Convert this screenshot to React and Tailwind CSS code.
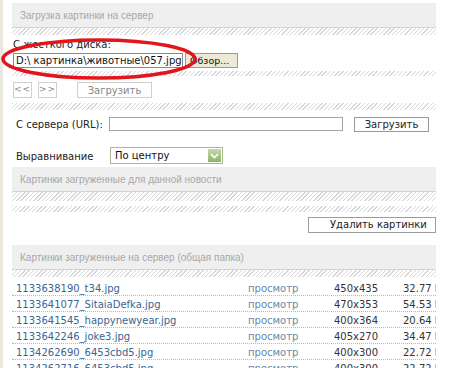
import React from 'react';

const hatch = 'bg-[repeating-linear-gradient(135deg,#d8d8d8_0px,#d8d8d8_1px,#ffffff_1px,#ffffff_3px)]';

const Header = ({ title }) => (
  <div className="h-[25px] bg-[#efefef] border-b border-[#d4d4d4] pl-[8px] flex items-center font-['Liberation_Sans',sans-serif] text-[10px] text-[#a8a8a8]">
    {title}
  </div>
);

const files = [
  ['1133638190_t34.jpg', '450x435', '32.77 Kb'],
  ['1133641077_SitaiaDefka.jpg', '470x353', '54.53 Kb'],
  ['1133641545_happynewyear.jpg', '400x364', '20.64 Kb'],
  ['1133642246_joke3.jpg', '405x270', '34.47 Kb'],
  ['1134262690_6453cbd5.jpg', '400x300', '22.72 Kb'],
  ['1134262716_6453cbd5.jpg', '400x300', '22.72 Kb'],
];

export default function App() {
  return (
    <div className="relative w-[450px] h-[368px] overflow-hidden bg-white flex font-['DejaVu_Sans',sans-serif] text-[10px] text-[#222]">
      <div className="w-[3px] h-full bg-[#ece8dd]" />

      <div className="ml-[9px] w-[424px] pt-[3px] overflow-hidden">
        <Header title="Загрузка картинки на сервер" />
        <div className={`h-[7px] ${hatch}`} />

        {/* local disk */}
        <div className="pt-[4px] pb-[3px] pl-[1px]">
          <div className="leading-[12px]">С жесткого диска:</div>
          <div className="mt-[2px] flex items-center">
            <div className="w-[170px] h-[15px] border border-[#8a8a8a] bg-white pl-[2px] leading-[13px] text-[10px] text-[#111]">
              D:\ картинка\животные\057.jpg
            </div>
            <div className="ml-[2px] w-[53px] h-[15px] border border-[#9a9a9a] bg-[#ece9d8] pl-[4px] leading-[13px] text-[9.5px] text-[#111]">
              Обзор...
            </div>
          </div>
        </div>
        <div className={`h-[5px] ${hatch}`} />

        <div className="pt-[6px] pb-[5px] pl-[1px] flex items-center">
          <div className="w-[19px] h-[16px] border border-[#cfcfcf] text-[#888] text-[9px] flex items-center justify-center tracking-[1px]">&lt;&lt;</div>
          <div className="ml-[6px] w-[19px] h-[16px] border border-[#cfcfcf] text-[#888] text-[9px] flex items-center justify-center tracking-[1px]">&gt;&gt;</div>
          <div className="ml-[20px] w-[75px] h-[16px] border border-[#cfcfcf] text-[#888] text-[10px] flex items-center justify-center">Загрузить</div>
        </div>
        <div className={`h-[7px] ${hatch}`} />

        {/* url */}
        <div className="pt-[7px] pb-[3px] pl-[4px]">
          <div className="flex items-start h-[15px]">
            <div className="w-[93px] leading-[15px] text-[#222]">С сервера (URL):</div>
            <div className="w-[234px] h-[14px] border border-[#a3a3a3] bg-white" />
            <div className="ml-[11px] w-[75px] h-[15px] border border-[#999] bg-white flex items-center justify-center text-[#222] text-[10px]">
              Загрузить
            </div>
          </div>
          <div className="mt-[15px] flex items-center h-[17px]">
            <div className="w-[94px] leading-[17px] pt-[2px]">Выравнивание</div>
            <div className="w-[113px] h-[17px] border border-[#a9b98a] bg-white flex items-center">
              <span className="flex-1 pl-[4px] text-[10px] text-[#111]">По центру</span>
              <div className="w-[13px] h-[13px] mr-[1px] bg-[linear-gradient(#c3dba8,#8fb26b)] flex items-center justify-center">
                <svg width="9" height="6" viewBox="0 0 9 6">
                  <path d="M1 1 L4.5 4.5 L8 1" stroke="#fff" strokeWidth="1.6" fill="none" />
                </svg>
              </div>
            </div>
          </div>
        </div>

        <Header title="Картинки загруженные для данной новости" />
        <div className={`h-[9px] ${hatch}`} />
        <div className="h-[5px]" />
        <div className={`h-[6px] ${hatch}`} />

        <div className="h-[33px] pt-[5px] flex">
          <div className="ml-[296px] w-[140px] h-[16px] border border-[#9c9c9c] bg-white pl-[21px] leading-[14px] text-[10px] text-[#222] whitespace-nowrap">
            Удалить картинки
          </div>
        </div>

        <Header title="Картинки загруженные на сервер (общая папка)" />
        <div className={`h-[7px] ${hatch}`} />

        <div className="mt-[3px]">
          {files.map(([name, dim, size]) => (
            <div key={name} className="h-[16px] flex border-b border-dotted border-[#b8b8b8] pt-[3px] leading-[12px] whitespace-nowrap">
              <span className="w-[236px] shrink-0 pl-[4px] text-[#3a6592]">{name}</span>
              <span className="w-[86px] shrink-0 text-[#6a88a8]">просмотр</span>
              <span className="w-[69px] shrink-0 text-[#333]">{dim}</span>
              <span className="shrink-0 text-[#333]">{size}</span>
            </div>
          ))}
        </div>
      </div>

      <svg className="absolute left-0 top-0 pointer-events-none" width="450" height="368">
        <ellipse cx="99" cy="59" rx="96" ry="19" fill="none" stroke="#e2151c" strokeWidth="3.5" />
      </svg>
    </div>
  );
}
